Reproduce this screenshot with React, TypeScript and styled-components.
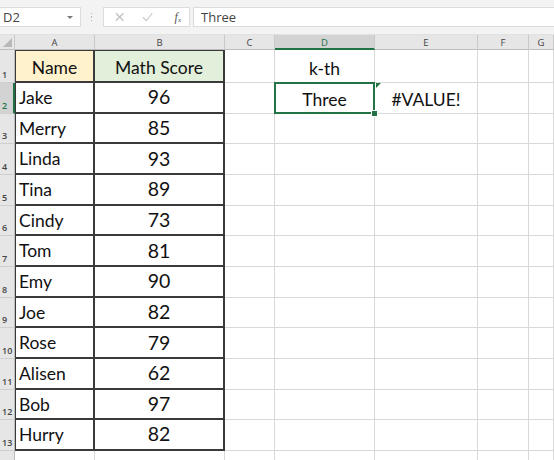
import styled, { createGlobalStyle, css } from "styled-components";

const GlobalStyle = createGlobalStyle`
  html, body {
    margin: 0;
    padding: 0;
    background: #ffffff;
    overflow: hidden;
  }
`;

const GREEN = "#217346";
const GRID = "#d9d9d9";
const DARK = "#3a3a3a";

const COLUMNS = ["A", "B", "C", "D", "E", "F", "G"];

const SCORES: [string, number][] = [
  ["Jake", 96],
  ["Merry", 85],
  ["Linda", 93],
  ["Tina", 89],
  ["Cindy", 73],
  ["Tom", 81],
  ["Emy", 90],
  ["Joe", 82],
  ["Rose", 79],
  ["Alisen", 62],
  ["Bob", 97],
  ["Hurry", 82],
];

export default function App() {
  return (
    <>
      <GlobalStyle />
      <Page>
        <FormulaBar>
          <NameBox>
            <span>D2</span>
            <DropArrow />
          </NameBox>
          <Grip>
            <i />
            <i />
            <i />
          </Grip>
          <ActionBox>
            <svg width="10" height="10" viewBox="0 0 10 10">
              <path d="M1 1 L9 9 M9 1 L1 9" stroke="#bdbdbd" strokeWidth="1.2" fill="none" />
            </svg>
            <svg width="12" height="10" viewBox="0 0 12 10">
              <path d="M1 5.5 L4.5 9 L11 1" stroke="#c4c4c4" strokeWidth="1.2" fill="none" />
            </svg>
            <Fx>
              f<sub>x</sub>
            </Fx>
          </ActionBox>
          <FormulaInput>Three</FormulaInput>
        </FormulaBar>

        <Sheet>
          <Corner />
          {COLUMNS.map((c) => (
            <ColHeader key={c} $active={c === "D"}>
              {c}
            </ColHeader>
          ))}

          <RowHeader>1</RowHeader>
          <Cell $fill="#fff2cc" $boxed $left $top $align="center">
            Name
          </Cell>
          <Cell $fill="#e2efda" $boxed $top $align="center">
            Math Score
          </Cell>
          <Cell />
          <Cell $align="center">k-th</Cell>
          <Cell />
          <Cell />
          <Cell />

          {SCORES.map(([name, score], i) => {
            const row = i + 2;
            return [
              <RowHeader key={`h${row}`} $active={row === 2}>
                {row}
              </RowHeader>,
              <Cell key={`a${row}`} $boxed $left $valign="top">
                {name}
              </Cell>,
              <Cell key={`b${row}`} $boxed $align="center" $big>
                {score}
              </Cell>,
              <Cell key={`c${row}`} />,
              row === 2 ? (
                <SelectedCell key={`d${row}`} $align="center">
                  Three
                  <FillHandle />
                </SelectedCell>
              ) : (
                <Cell key={`d${row}`} />
              ),
              row === 2 ? (
                <ErrorCell key={`e${row}`} $align="center">
                  #VALUE!
                </ErrorCell>
              ) : (
                <Cell key={`e${row}`} />
              ),
              <Cell key={`f${row}`} />,
              <Cell key={`g${row}`} />,
            ];
          })}

          {/* row 14 is cut by the window edge, only its top shows */}
          <RowHeader />
          {COLUMNS.map((c) => (
            <Cell key={`r14${c}`} />
          ))}
        </Sheet>
      </Page>
    </>
  );
}

const Page = styled.div`
  width: 554px;
  height: 460px;
  overflow: hidden;
  background: #ffffff;
  display: flex;
  flex-direction: column;
`;

const FormulaBar = styled.div`
  flex-shrink: 0;
  height: 35px;
  box-sizing: border-box;
  padding-top: 7px;
  background: #f3f3f3;
  border-bottom: 1px solid #e1e1e1;
  display: flex;
  align-items: flex-start;
  font-family: "Open Sans", "Noto Sans", sans-serif;
  font-size: 12px;
  color: #444;
`;

const NameBox = styled.div`
  width: 81px;
  height: 20px;
  box-sizing: border-box;
  background: #ffffff;
  border: 1px solid #dcdcdc;
  border-left: none;
  display: flex;
  align-items: center;
  justify-content: space-between;
  padding: 0 7px 0 3px;
  font-size: 13px;
`;

const DropArrow = styled.span`
  width: 0;
  height: 0;
  border-left: 3px solid transparent;
  border-right: 3px solid transparent;
  border-top: 3px solid #7a7a7a;
  margin-top: 1px;
`;

const Grip = styled.div`
  width: 21px;
  height: 20px;
  display: flex;
  flex-direction: column;
  align-items: center;
  justify-content: center;
  gap: 2px;

  i {
    width: 1px;
    height: 1.5px;
    background: #b5b5b5;
  }
`;

const ActionBox = styled.div`
  width: 87px;
  height: 20px;
  box-sizing: border-box;
  background: #ffffff;
  border: 1px solid #dcdcdc;
  display: flex;
  align-items: center;
  padding: 0 8px 0 11px;
  gap: 18px;
  margin-left: 1px;
`;

const Fx = styled.span`
  font-family: "Liberation Serif", serif;
  font-style: italic;
  font-size: 12px;
  color: #555;
  margin-left: 3px;

  sub {
    font-size: 7px;
    vertical-align: -1px;
  }
`;

const FormulaInput = styled.div`
  flex: 1;
  height: 20px;
  box-sizing: border-box;
  margin-left: 3px;
  background: #ffffff;
  border: 1px solid #dcdcdc;
  border-right: none;
  padding-left: 7px;
  display: flex;
  align-items: center;
  font-size: 13px;
  color: #444;
`;

const Sheet = styled.div`
  flex-shrink: 0;
  display: grid;
  grid-template-columns: 15px 80px 130px 50px 100px 103px 51px 1fr;
  grid-template-rows: 15px 33px repeat(12, 30.67px) 30px;
  font-family: "Lato", "Open Sans", sans-serif;
  color: #111;
`;

const headerBase = css`
  background: #e6e6e6;
  box-sizing: border-box;
  border-right: 1px solid #c9c9c9;
  border-bottom: 1px solid #bdbdbd;
  font-family: "Open Sans", "Noto Sans", sans-serif;
  font-size: 9.5px;
  color: #444;
`;

const Corner = styled.div`
  ${headerBase};
  position: relative;

  &::after {
    content: "";
    position: absolute;
    right: 2px;
    bottom: 2px;
    width: 0;
    height: 0;
    border-left: 9px solid transparent;
    border-bottom: 9px solid #b8b8b8;
  }
`;

const ColHeader = styled.div<{ $active?: boolean }>`
  ${headerBase};
  display: flex;
  align-items: center;
  justify-content: center;
  padding-top: 1px;

  ${({ $active }) =>
    $active &&
    css`
      background: #d3d3d3;
      color: ${GREEN};
      border-bottom: 2px solid ${GREEN};
    `}
`;

const RowHeader = styled.div<{ $active?: boolean }>`
  ${headerBase};
  border-right: 1px solid #bdbdbd;
  border-bottom: 1px solid #cfcfcf;
  display: flex;
  align-items: flex-end;
  padding: 0 0 3px 2px;
  font-weight: 600;
  font-size: 9px;
  line-height: 1;

  ${({ $active }) =>
    $active &&
    css`
      background: #d3d3d3;
      color: ${GREEN};
      border-right: 2px solid ${GREEN};
    `}
`;

type CellProps = {
  $fill?: string;
  $boxed?: boolean;
  $left?: boolean;
  $top?: boolean;
  $align?: "left" | "center";
  $valign?: "top" | "bottom";
  $big?: boolean;
};

const Cell = styled.div<CellProps>`
  box-sizing: border-box;
  background: ${({ $fill }) => $fill || "#ffffff"};
  border-right: 1px solid ${GRID};
  border-bottom: 1px solid ${GRID};
  display: flex;
  justify-content: ${({ $align }) => ($align === "center" ? "center" : "flex-start")};
  align-items: ${({ $valign }) => ($valign === "top" ? "flex-start" : "flex-end")};
  padding: ${({ $valign }) => ($valign === "top" ? "4px 3px 0" : "0 3px 3px")};
  font-size: ${({ $big }) => ($big ? "19.5px" : "17.5px")};
  line-height: 1.2;
  white-space: nowrap;

  ${({ $boxed }) =>
    $boxed &&
    css`
      border-right: 2px solid ${DARK};
      border-bottom: 2px solid ${DARK};
    `}
  ${({ $left }) =>
    $left &&
    css`
      border-left: 1px solid ${DARK};
    `}
  ${({ $top }) =>
    $top &&
    css`
      border-top: 1px solid ${DARK};
    `}
`;

const SelectedCell = styled(Cell)`
  position: relative;

  &::after {
    content: "";
    position: absolute;
    inset: -1px -1px -1px -1px;
    border: 2px solid ${GREEN};
    pointer-events: none;
  }
`;

const FillHandle = styled.span`
  position: absolute;
  right: -4px;
  bottom: -4px;
  width: 5px;
  height: 5px;
  background: ${GREEN};
  border: 1px solid #ffffff;
  z-index: 2;
`;

const ErrorCell = styled(Cell)`
  position: relative;

  &::before {
    content: "";
    position: absolute;
    left: 1px;
    top: 0;
    width: 0;
    height: 0;
    border-top: 5px solid ${GREEN};
    border-right: 5px solid transparent;
  }
`;
